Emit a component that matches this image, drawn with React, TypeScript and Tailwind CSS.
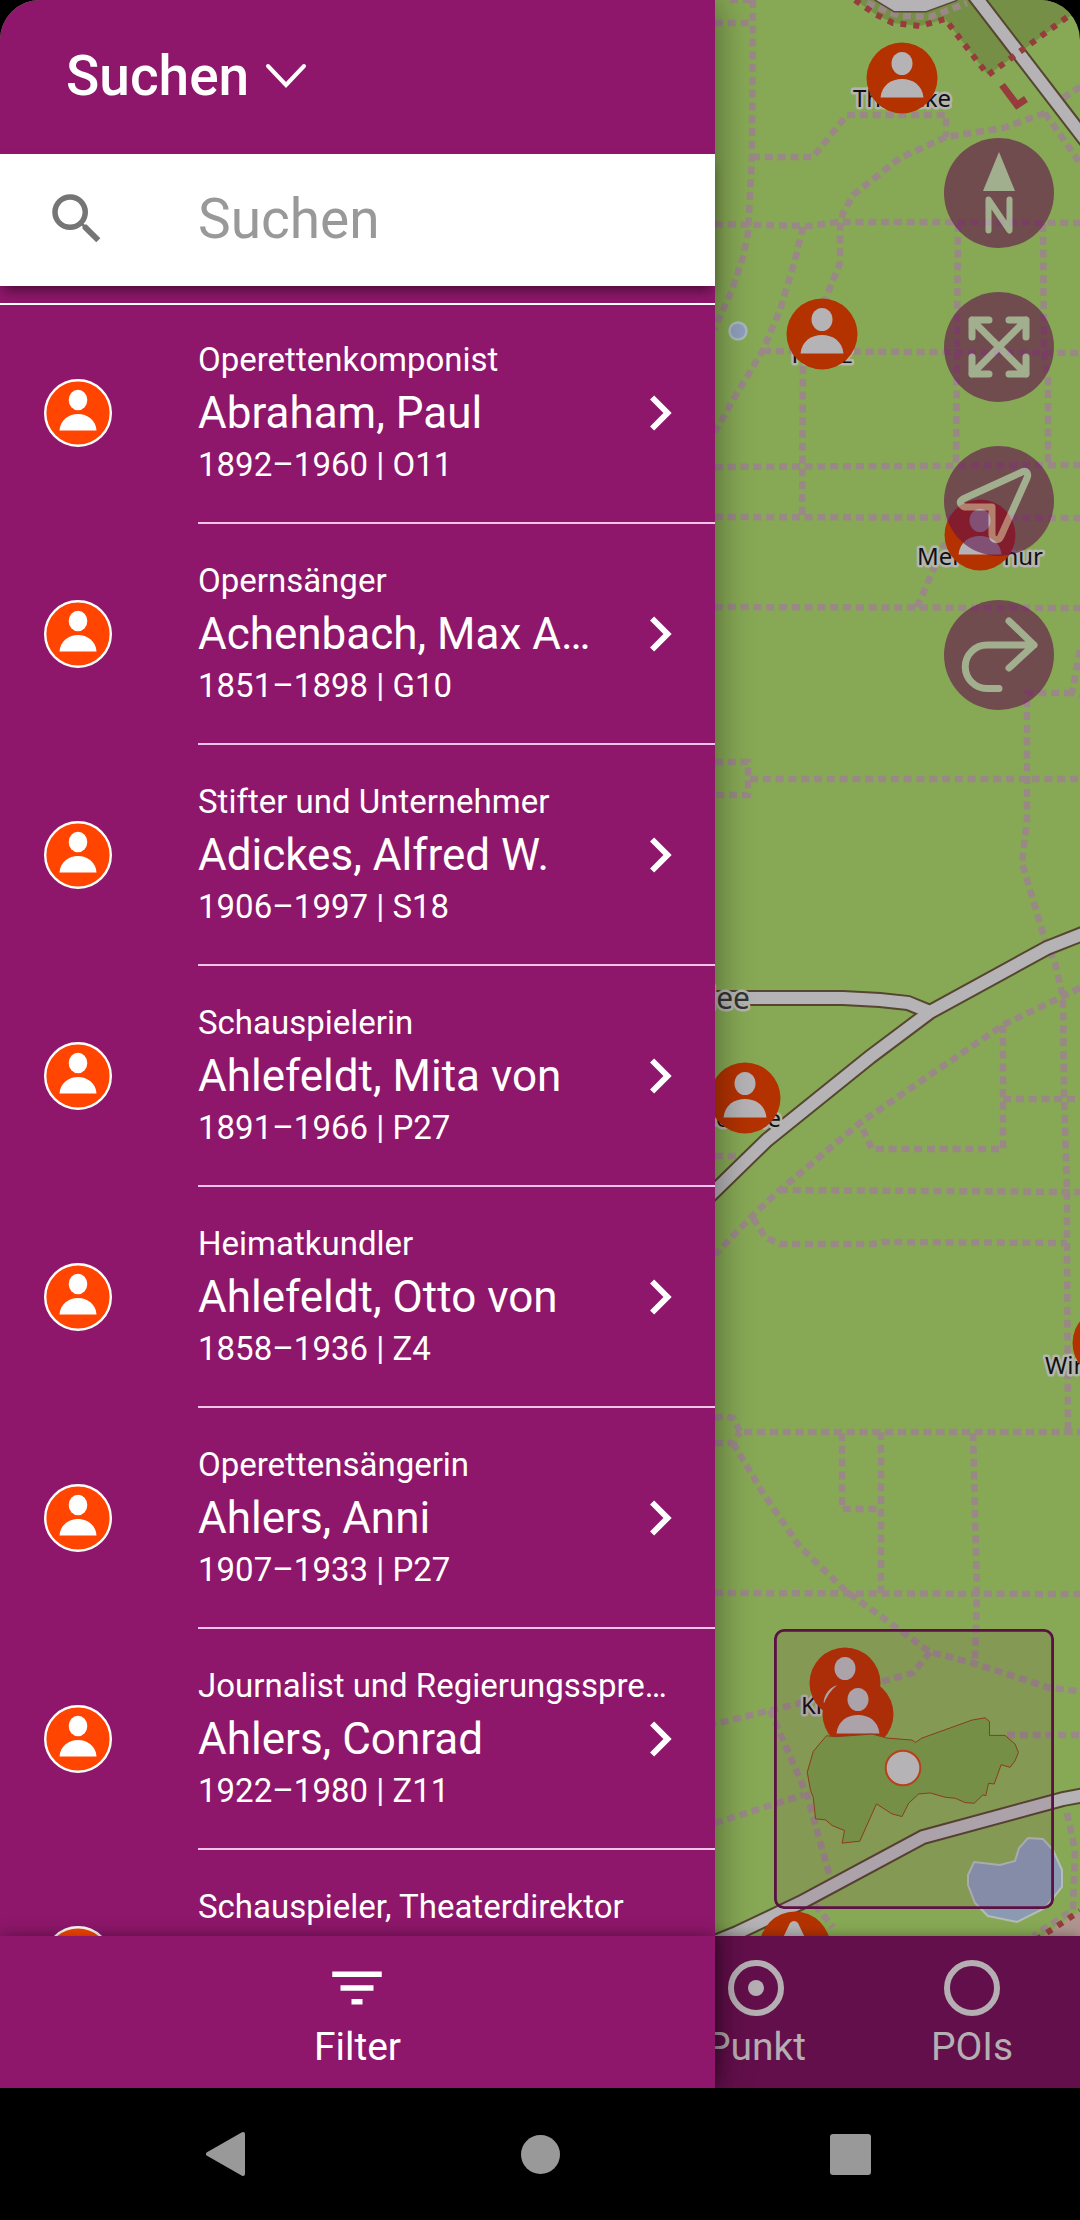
import { MdChevronRight, MdFilterList, MdSearch } from "react-icons/md";

const people = [
  { role: "Operettenkomponist", name: "Abraham, Paul", info: "1892–1960 | O11" },
  { role: "Opernsänger", name: "Achenbach, Max Alvary", info: "1851–1898 | G10" },
  { role: "Stifter und Unternehmer", name: "Adickes, Alfred W.", info: "1906–1997 | S18" },
  { role: "Schauspielerin", name: "Ahlefeldt, Mita von", info: "1891–1966 | P27" },
  { role: "Heimatkundler", name: "Ahlefeldt, Otto von", info: "1858–1936 | Z4" },
  { role: "Operettensängerin", name: "Ahlers, Anni", info: "1907–1933 | P27" },
  { role: "Journalist und Regierungssprecher", name: "Ahlers, Conrad", info: "1922–1980 | Z11" },
  { role: "Schauspieler, Theaterdirektor", name: "", info: "" },
];

const footpaths = [
  "M753 0L752 157L748 233L743 257L732 290L714 330",
  "M715 23H752M730 0H753",
  "M752 157H813L847 115H946V137",
  "M1045 113L1003 128L946 137L900 158L853 195L843 213L840 227V263L825 300",
  "M715 224L810 226L837 222H933L1080 223",
  "M803 227L795 260L780 310L763 350L733 400L715 432",
  "M763 351L1080 353",
  "M803 366L802 517",
  "M958 224L956 465",
  "M1043 224L1044 353L1048 380V465",
  "M715 467L1080 465",
  "M715 517L1080 518",
  "M715 607L1080 608",
  "M917 607L945 543",
  "M1080 650L1072 693L1080 696",
  "M1072 693H1027V820L1022 863L1045 940L1055 963L1063 997L1064 1093L1067 1190V1243L1068 1432",
  "M715 762H748V795H715",
  "M750 779H1080",
  "M1080 988L1003 1025L860 1123L780 1190L753 1215L715 1255",
  "M1003 1025V1149H872L860 1123",
  "M1003 1099H1080",
  "M780 1190L1080 1192",
  "M753 1218L765 1237L780 1244H873L883 1242L1067 1243",
  "M715 1156H743",
  "M715 1418L725 1416L733 1418L740 1432H1080",
  "M715 1443H733L740 1432",
  "M733 1443L763 1493L800 1547L847 1592L897 1628L930 1652L973 1663L1050 1688L1080 1691",
  "M842 1433V1509H880",
  "M881 1432V1593",
  "M973 1433L977 1594L975 1663",
  "M715 1593L1080 1594",
  "M930 1652L913 1673L880 1682L800 1703L715 1724",
  "M770 1710L807 1795L830 1877",
  "M815 1905L833 1927",
  "M715 1823L803 1795",
  "M1007 1735H1080",
  "M1067 1813L1075 1850L1073 1910L1033 1936",
  "M1045 113L1080 163",
  "M1063 98L1080 87",
];

const roads = [
  "M690 998H843L880 1000L908 1003L930 1012",
  "M690 1215L767 1140L870 1057L930 1012L1047 948L1095 929",
  "M974 -5L1090 146",
  "M700 1948L737 1933L800 1903L923 1837L1063 1799L1095 1793",
];

const markers = [
  { x: 902, y: 78 },
  { x: 822, y: 334 },
  { x: 980, y: 535 },
  { x: 745, y: 1098 },
  { x: 1108, y: 1343 },
  { x: 845, y: 1683 },
  { x: 858, y: 1714 },
];

const labels = [
  { x: 902, y: 107, text: "Thielicke", anchor: "middle" },
  { x: 822, y: 363, text: "Hertz", anchor: "middle" },
  { x: 917, y: 565, text: "Mer", anchor: "start" },
  { x: 1043, y: 565, text: "hur", anchor: "end" },
  { x: 781, y: 1127, text: "Boethe", anchor: "end" },
  { x: 1045, y: 1374, text: "Wir", anchor: "start" },
  { x: 801, y: 1714, text: "Kl", anchor: "start" },
] as const;

function MapMarker({ x, y }: { x: number; y: number }) {
  return (
    <g transform={`translate(${x} ${y})`}>
      <circle r="35.5" fill="#b43200" />
      <ellipse cy="-14.5" rx="10.5" ry="11.5" fill="#b5b3b5" />
      <path d="M-21.5 19.5C-20 7-11 1 0 1S20 7 21.5 19.5Z" fill="#b5b3b5" />
    </g>
  );
}

function CemeteryMap() {
  return (
    <svg
      viewBox="0 0 1080 1936"
      preserveAspectRatio="xMaxYMin slice"
      className="absolute inset-0 h-full w-full bg-[#87a955]"
      aria-hidden="true"
    >
      <path d="M855 0L875 14L893 23L920 26L945 19L988 75L1080 9V0Z" fill="#768f46" />
      <path d="M1033 1942L1080 1911V1942Z" fill="#b0958f" />
      <g fill="none" stroke="#998886" strokeWidth="6.5" strokeDasharray="8 4.8">
        {footpaths.map((d) => (
          <path key={d} d={d} />
        ))}
        <path d="M867 3L900 16L930 17L967 3" />
      </g>
      <path d="M878 -6L896 5L925 5L955 -6" fill="#b5b3b5" stroke="#5a4a35" strokeWidth="15" />
      <path d="M878 -6L896 5L925 5L955 -6" fill="#b5b3b5" stroke="#b5b3b5" strokeWidth="12" />
      <g fill="none" stroke="#55462f" strokeWidth="16">
        {roads.map((d) => (
          <path key={d} d={d} />
        ))}
      </g>
      <g fill="none" stroke="#b5b3b5" strokeWidth="12">
        {roads.map((d) => (
          <path key={d} d={d} />
        ))}
      </g>
      <g fill="none" stroke="#963c3c" strokeWidth="6">
        <path d="M855 0L875 14L893 23L920 26L945 19L988 75L1070 15" strokeDasharray="6 7" />
        <path d="M1036 1940L1080 1911" strokeDasharray="6 7" />
        <path d="M1002 85L1017 105L1026 99" strokeWidth="7" />
      </g>
      <path
        d="M974 1862L1000 1865L1015 1861L1019 1848L1028 1838L1043 1839L1053 1850L1062 1870L1062 1887L1045 1908L1017 1922L988 1916L975 1903L968 1885V1875Z"
        fill="#8a9ab2"
        stroke="#b4bcb8"
        strokeWidth="2"
      />
      <circle cx="738" cy="331" r="8.5" fill="#8fa0bd" stroke="#aab9bb" strokeWidth="2.5" />
      <g
        fill="#111"
        stroke="#b5b5b0"
        strokeWidth="5"
        strokeLinejoin="round"
        paintOrder="stroke"
        className="font-['Noto_Sans',sans-serif] text-[24px]"
      >
        {labels.map((label) => (
          <text key={label.text} x={label.x} y={label.y} textAnchor={label.anchor}>
            {label.text}
          </text>
        ))}
        <text x="750" y="1009" textAnchor="end" fill="#333" className="text-[30px]">
          allee
        </text>
      </g>
      {markers.map((m) => (
        <MapMarker key={m.y} x={m.x} y={m.y} />
      ))}
      <circle cx="795" cy="1947" r="35.5" fill="#b43200" />
      <path d="M781 1942L790 1923Q794 1919 798 1923L807 1942Z" fill="#b5b3b5" />
    </svg>
  );
}

function MiniMap() {
  return (
    <svg
      viewBox="220 84 842 842"
      className="block size-[280px] rounded-[10px] bg-[#63104b]/10"
      role="img"
      aria-label="Übersichtskarte"
    >
      <path
        d="M378 405L405 408L515 400L560 412L635 418L645 425L665 412L815 358L855 351L868 362V404H915L945 430L955 455L945 480L930 500L903 492L893 520L882 550L865 548L857 585L848 583L822 608L795 606L765 593L735 590L690 577L655 580L625 608L605 648L575 640L528 610L478 722L425 728L432 690L395 675L375 658L345 655L338 590L330 570L320 515L338 452Z"
        fill="#768f46"
        stroke="#8c3c1c"
        strokeWidth="3"
      />
      <circle cx="608" cy="502" r="52" fill="#b5b3b5" stroke="#b8401a" strokeWidth="6" />
      <rect x="224" y="88" width="834" height="834" rx="26" fill="none" stroke="#5c1044" strokeWidth="9" />
    </svg>
  );
}

const mapActions = [
  {
    label: "Nach Norden ausrichten",
    icon: (
      <>
        <path d="M0-41L16-2H-16Z" fill="currentColor" stroke="none" />
        <path d="M-10.5 37.5V6.5L10.5 37.5V6.5" strokeWidth="6" />
      </>
    ),
  },
  {
    label: "Karte einpassen",
    icon: (
      <path d="M-27-27L27 27M27-27L-27 27M-27-10V-27H-10M10-27H27V-10M27 10V27H10M-10 27H-27V10" />
    ),
  },
  {
    label: "Standort",
    icon: (
      <path d="M23-29L-36-2C-41 1-38 5-34 6H-7V34C-6 40 0 40 2 35L28-23C30-28 27-31 23-29Z" />
    ),
  },
  {
    label: "Route",
    icon: <path d="M0 33.5H-12A21.75 21.75 0 0 1-12-10H35M10-34L35-10L10 13" />,
  },
];

function Avatar() {
  return (
    <svg viewBox="-34 -34 68 68" className="mx-11 mb-0.5 size-[68px] shrink-0" aria-hidden="true">
      <circle r="32.8" fill="#ff4500" stroke="#fff" strokeWidth="2.4" />
      <ellipse cy="-13" rx="9.3" ry="10.3" fill="#fff" />
      <path d="M-18.5 17.5C-18 7-9 1 0 1S18 7 18.5 17.5Z" fill="#fff" />
    </svg>
  );
}

export default function App() {
  return (
    <div className="flex h-screen flex-col bg-black font-[Roboto,sans-serif]">
      <div className="relative flex min-h-0 flex-1 flex-col overflow-hidden rounded-t-[40px]">
        <main className="relative min-h-0 flex-1">
          <CemeteryMap />
          <div className="relative flex h-full flex-col items-end justify-between px-[26px] pt-[138px] pb-[27px]">
            <div className="flex flex-col gap-11">
              {mapActions.map((action) => (
                <button
                  key={action.label}
                  aria-label={action.label}
                  className="size-[110px] rounded-full bg-[#63104b] text-[#b5b3b5] opacity-60"
                >
                  <svg
                    viewBox="-55 -55 110 110"
                    className="size-full"
                    fill="none"
                    stroke="currentColor"
                    strokeWidth="7"
                    strokeLinecap="round"
                    strokeLinejoin="round"
                  >
                    {action.icon}
                  </svg>
                </button>
              ))}
            </div>
            <MiniMap />
          </div>
        </main>

        <nav className="relative grid h-[152px] shrink-0 grid-cols-5 bg-[#630f4b] text-[#b5aeb3] shadow-[0_0_12px_rgba(0,0,0,0.35)]">
          <button className="col-start-4 flex flex-col items-center pt-6">
            <svg viewBox="0 0 56 56" className="size-14" aria-hidden="true">
              <circle cx="28" cy="28" r="25" fill="none" stroke="currentColor" strokeWidth="6" />
              <circle cx="28" cy="28" r="8" fill="currentColor" />
            </svg>
            <span className="mt-2 text-[39px] leading-[46px]">Punkt</span>
          </button>
          <button className="flex flex-col items-center pt-6">
            <svg viewBox="0 0 56 56" className="size-14" aria-hidden="true">
              <circle cx="28" cy="28" r="25" fill="none" stroke="currentColor" strokeWidth="6" />
            </svg>
            <span className="mt-2 text-[39px] leading-[46px]">POIs</span>
          </button>
        </nav>

        <aside className="absolute inset-y-0 left-0 flex w-[66.2%] flex-col bg-[#8e176b] text-white shadow-[0_0_36px_rgba(0,0,0,0.45)]">
          <header className="flex h-[154px] shrink-0 items-center px-[66px] pb-0.5">
            <button className="flex items-center gap-4 text-[55px] leading-[66px] font-medium">
              Suchen
              <svg viewBox="0 0 42 26" className="h-[26px] w-[42px]" fill="none" stroke="currentColor" strokeWidth="4" strokeLinecap="round" aria-hidden="true">
                <path d="M3 3L21 22L39 3" />
              </svg>
            </button>
          </header>

          <label className="relative z-10 flex h-[132px] shrink-0 items-center bg-white pb-0.5 pl-11 shadow-[0_8px_12px_-4px_rgba(0,0,0,0.5)]">
            <MdSearch size={66} className="shrink-0 text-[#757575]" />
            <input
              type="search"
              aria-label="Suchen"
              placeholder="Suchen"
              className="ml-[88px] min-w-0 flex-1 text-[55px] leading-[66px] text-black outline-none placeholder:text-[#999]"
            />
          </label>

          <div className="relative z-10 mt-[17px] -mb-0.5 h-0.5 shrink-0 bg-white" />

          <ul className="min-h-0 flex-1 overflow-hidden">
            {people.map((person) => (
              <li key={person.role}>
                <button className="flex h-[221px] w-full items-center text-left">
                  <Avatar />
                  <div className="ml-[42px] flex h-full min-w-0 flex-1 items-center border-b-2 border-[#f0c4e6]">
                    <div className="grid w-full grid-cols-[1fr_80px] pr-10 pb-0.5">
                      <span className="col-span-2 truncate text-[33px] leading-[50px]">{person.role}</span>
                      <span className="h-14 truncate text-[44px] leading-[56px]">{person.name}</span>
                      <MdChevronRight size={70} className="-my-[7px] ml-[30px]" aria-hidden="true" />
                      <span className="col-span-2 h-12 truncate text-[33px] leading-[48px]">{person.info}</span>
                    </div>
                  </div>
                </button>
              </li>
            ))}
          </ul>

          <button className="relative flex h-[152px] shrink-0 flex-col items-center bg-[#8e176b] pt-[19px] shadow-[0_0_16px_rgba(0,0,0,0.4)]">
            <MdFilterList size={66} aria-hidden="true" />
            <span className="mt-[3px] text-[39px] leading-[46px]">Filter</span>
          </button>
        </aside>
      </div>

      <div className="grid h-[132px] shrink-0 grid-cols-3 place-items-center px-[75px] text-[#999]">
        <button aria-label="Zurück">
          <svg viewBox="0 0 48 48" className="size-12" fill="currentColor" stroke="currentColor" strokeWidth="4" strokeLinejoin="round">
            <path d="M2 24L37 4V44Z" />
          </svg>
        </button>
        <button aria-label="Startseite" className="size-[39px] rounded-full bg-current" />
        <button aria-label="Übersicht" className="size-[41px] rounded-[3px] bg-current" />
      </div>
    </div>
  );
}
